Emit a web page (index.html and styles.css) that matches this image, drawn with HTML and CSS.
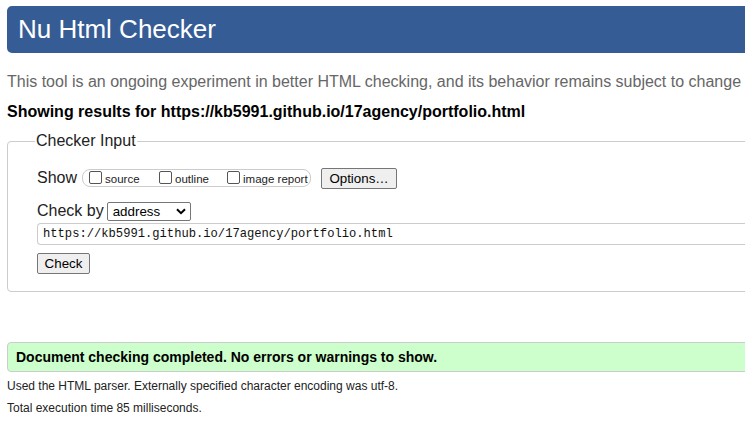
FILE: index.html
```html
<!DOCTYPE html>
<html>
<head>
<meta charset="utf-8">
<link rel="stylesheet" href="styles.css">
</head>
<body>
<div class="page">
  <h1 class="banner">Nu Html Checker</h1>
  <p class="intro">This tool is an ongoing experiment in better HTML checking, and its behavior remains subject to change</p>
  <p class="showing">Showing results for https://kb5991.github.io/17agency/portfolio.html</p>
  <fieldset class="input-box">
    <legend class="legend">Checker Input</legend>
    <div class="row show-row">
      <span class="lbl">Show</span>
      <span class="opts">
        <label class="opt opt-source"><span class="cb"></span>source</label>
        <label class="opt opt-outline"><span class="cb"></span>outline</label>
        <label class="opt"><span class="cb"></span>image report</label>
      </span>
      <span class="btn btn-options">Options…</span>
    </div>
    <div class="row by-row">
      <span class="lbl">Check by</span>
      <span class="select">address<svg class="chev" width="10" height="7" viewBox="0 0 10 7"><path d="M1 1.2 L5 5.2 L9 1.2" fill="none" stroke="#000" stroke-width="2"/></svg></span>
    </div>
    <div class="url">https://kb5991.github.io/17agency/portfolio.html</div>
    <div class="row check-row"><span class="btn btn-check">Check</span></div>
  </fieldset>
  <div class="success">Document checking completed. No errors or warnings to show.</div>
  <p class="meta">Used the HTML parser. Externally specified character encoding was utf-8.</p>
  <p class="meta meta2">Total execution time 85 milliseconds.</p>
</div>
</body>
</html>
```
FILE: styles.css
```css
html, body {
  margin: 0;
  padding: 0;
  overflow: hidden;
  background: #fff;
}
body {
  font-family: "Liberation Sans", Arial, sans-serif;
  color: #000;
}
.page {
  width: 820px;
  padding: 6px 0 0 7px;
}
.banner {
  margin: 0;
  height: 47px;
  box-sizing: border-box;
  background: #365c95;
  color: #fff;
  font-weight: normal;
  font-size: 26px;
  line-height: 47px;
  padding-left: 11px;
  border-radius: 5px;
}
.intro {
  margin: 19px 0 0;
  font-size: 16px;
  line-height: 20px;
  color: #666;
}
.showing {
  margin: 10px 0 0;
  font-size: 16px;
  line-height: 20px;
  font-weight: bold;
}
.input-box {
  margin: 10px 0 0;
  border: 1px solid #ccc;
  border-radius: 4px;
  padding: 17px 0 17px 29px;
}
.legend {
  font-size: 16px;
  color: #222;
  padding: 0 1px;
  margin-left: -2px;
}
.row {
  display: flex;
  align-items: center;
}
.lbl {
  font-size: 16px;
  color: #222;
}
.show-row {
  height: 22px;
}
.opts {
  display: flex;
  align-items: center;
  margin-left: 5px;
  height: 18px;
  width: 229px;
  box-sizing: border-box;
  border: 1px solid #ccc;
  border-radius: 8px;
  padding-left: 6px;
}
.opt {
  display: flex;
  align-items: center;
  font-size: 11.5px;
  color: #222;
  padding-top: 2px;
}
.opt-source { width: 70px; }
.opt-outline { width: 68px; }
.cb {
  width: 11px;
  height: 11px;
  border: 1px solid #555;
  border-radius: 2px;
  margin-right: 3px;
  margin-top: -4px;
  background: #fff;
}
.btn {
  display: inline-flex;
  align-items: center;
  justify-content: center;
  box-sizing: border-box;
  border: 1px solid #767676;
  border-radius: 2px;
  background: #efefef;
  font-size: 13.33px;
  color: #000;
}
.btn-options {
  margin-left: 10px;
  width: 76px;
  height: 21px;
}
.by-row {
  margin-top: 12px;
  height: 20px;
}
.select {
  margin-left: 3px;
  display: inline-flex;
  align-items: center;
  justify-content: space-between;
  box-sizing: border-box;
  width: 84px;
  height: 19px;
  border: 1px solid #767676;
  border-radius: 2px;
  padding: 0 4px 0 5px;
  font-size: 13.33px;
}
.url {
  margin-top: 2px;
  height: 22px;
  box-sizing: border-box;
  border: 1px solid #ccc;
  border-right: none;
  border-radius: 4px 0 0 4px;
  padding-left: 5px;
  font-family: "Liberation Mono", "DejaVu Sans Mono", monospace;
  font-size: 12.15px;
  line-height: 20px;
  color: #111;
}
.check-row {
  margin-top: 8px;
}
.btn-check {
  width: 53px;
  height: 21px;
}
.success {
  margin-top: 50px;
  height: 30px;
  box-sizing: border-box;
  border: 1px solid #ccc;
  border-radius: 4px;
  background: #ccffcc;
  padding-left: 8px;
  font-weight: bold;
  font-size: 14px;
  line-height: 28px;
}
.meta {
  margin: 6px 0 0;
  font-size: 12px;
  line-height: 16px;
  color: #222;
}
.meta2 {
  margin-top: 6px;
}
```
